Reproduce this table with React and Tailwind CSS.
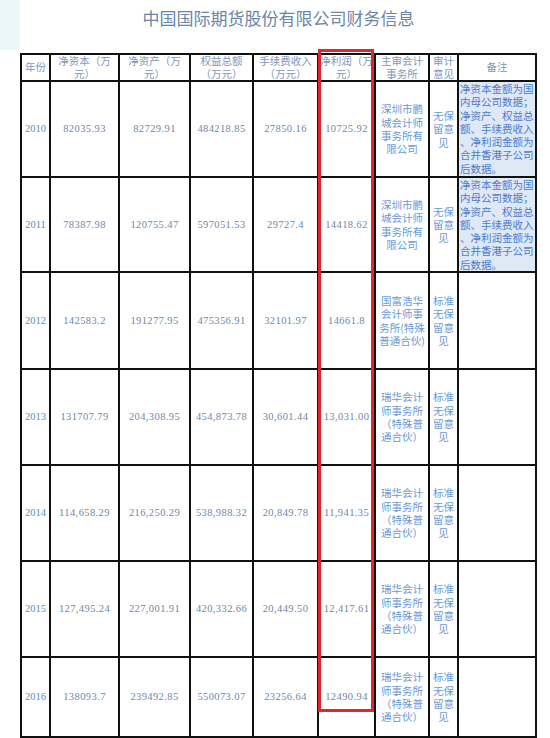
import React from "react";

const serif = "font-['Liberation_Serif','Noto_Sans_CJK_SC',serif]";
const cjk = "font-['Noto_Sans_CJK_SC',sans-serif]";

const headers = [
  { lines: ["年份"], center: true },
  { lines: ["净资本（万", "元）"] },
  { lines: ["净资产（万", "元）"] },
  { lines: ["权益总额", "（万元）"] },
  { lines: ["手续费收入", "（万元）"] },
  { lines: ["净利润（万", "元）"] },
  { lines: ["主审会计", "事务所"] },
  { lines: ["审计", "意见"] },
  { lines: ["备注"], center: true },
];

const pengcheng = ["深圳市鹏", "城会计师", "事务所有", "限公司"];
const guofu = ["国富浩华", "会计师事", "务所(特殊", "普通合伙)"];
const ruihua = ["瑞华会计", "师事务所", "（特殊普", "通合伙）"];
const wubaoliu = ["无保", "留意", "见"];
const biaozhun = ["标准", "无保", "留意", "见"];
const note = [
  "净资本金额为国",
  "内母公司数据；",
  "净资产、权益总",
  "额、手续费收入",
  "、净利润金额为",
  "合并香港子公司",
  "后数据。",
];

const rows = [
  { year: "2010", nums: ["82035.93", "82729.91", "484218.85", "27850.16", "10725.92"], firm: pengcheng, opinion: wubaoliu, note },
  { year: "2011", nums: ["78387.98", "120755.47", "597051.53", "29727.4", "14418.62"], firm: pengcheng, opinion: wubaoliu, note },
  { year: "2012", nums: ["142583.2", "191277.95", "475356.91", "32101.97", "14661.8"], firm: guofu, opinion: biaozhun },
  { year: "2013", nums: ["131707.79", "204,308.95", "454,873.78", "30,601.44", "13,031.00"], firm: ruihua, opinion: biaozhun },
  { year: "2014", nums: ["114,658.29", "216,250.29", "538,988.32", "20,849.78", "11,941.35"], firm: ruihua, opinion: biaozhun },
  { year: "2015", nums: ["127,495.24", "227,001.91", "420,332.66", "20,449.50", "12,417.61"], firm: ruihua, opinion: biaozhun },
  { year: "2016", nums: ["138093.7", "239492.85", "550073.07", "23256.64", "12490.94"], firm: ruihua, opinion: biaozhun },
];

// one text node per cell, lines kept as the source breaks them
const Lines = ({ lines }) => <span className="whitespace-pre">{lines.join("\n")}</span>;

export default function App() {
  return (
    <div className="w-[550px] h-[738px] overflow-hidden bg-white flex">
      {/* left tint */}
      <div className="w-[20px] shrink-0">
        <div className="h-[50px] bg-[#ebf8fa]" />
      </div>

      <div className="relative w-[517px] shrink-0">
        {/* Title */}
        <h1 className={`h-[53px] pt-[8px] text-center text-[17px] leading-[20px] text-[#6c86a6] ${cjk}`}>
          中国国际期货股份有限公司财务信息
        </h1>

        {/* Table */}
        <div className="grid grid-cols-[27px_67px_69px_61px_63px_55px_52px_27px_76px] grid-rows-[25px_94px_93px_95px_94px_94px_94px_78px] gap-[2px] p-[2px] bg-[#111]">
          {headers.map((h, i) => (
            <div
              key={i}
              className={`bg-white overflow-hidden flex flex-col items-center text-center text-[10.5px] leading-[12.5px] text-[#7e97ba] ${cjk} ${
                h.center ? "justify-center" : "justify-start"
              }`}
            >
              <Lines lines={h.lines} />
            </div>
          ))}

          {rows.map((r) => (
            <React.Fragment key={r.year}>
              <div className={`bg-white flex items-center justify-center text-[10.5px] text-[#5a8ec6] ${serif}`}>
                {r.year}
              </div>
              {r.nums.map((n, i) => (
                <div
                  key={i}
                  className={`bg-white overflow-hidden flex items-center justify-center whitespace-nowrap text-[10.5px] tracking-[0.4px] text-[#6f87a8] ${serif}`}
                >
                  {n}
                </div>
              ))}
              <div className={`bg-white flex flex-col items-center justify-center text-center text-[10.5px] leading-[13.3px] text-[#6a98d4] ${cjk}`}>
                <Lines lines={r.firm} />
              </div>
              <div className={`bg-white flex flex-col items-center justify-center text-center text-[10.5px] leading-[13.3px] text-[#6a98d4] ${cjk}`}>
                <Lines lines={r.opinion} />
              </div>
              {r.note ? (
                <div className={`bg-[#dfe8f5] overflow-hidden pl-[1px] text-[10.5px] leading-[13.3px] text-[#4b7ccb] ${cjk}`}>
                  <Lines lines={r.note} />
                </div>
              ) : (
                <div className="bg-white" />
              )}
            </React.Fragment>
          ))}
        </div>

        {/* red highlight box over 净利润 column */}
        <div className="absolute left-[298px] top-[49px] w-[56px] h-[663px] border-[3px] border-[#e2262b]" />
      </div>
    </div>
  );
}
